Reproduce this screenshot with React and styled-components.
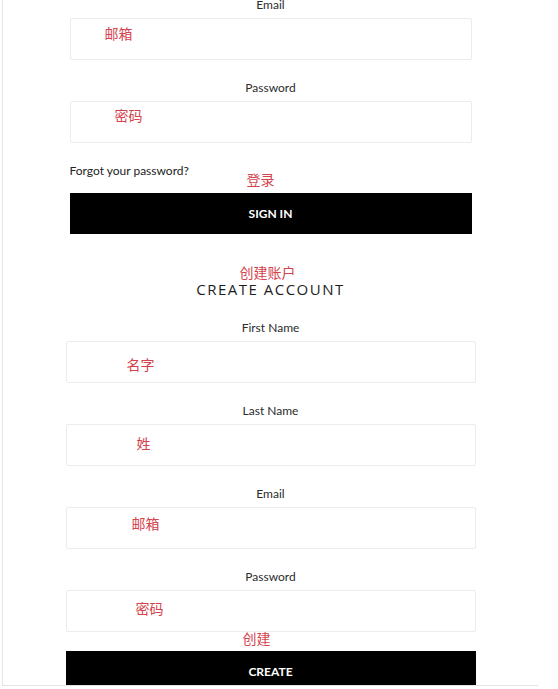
import React from 'react'
import styled, { createGlobalStyle } from 'styled-components'

const GlobalStyle = createGlobalStyle`
    html, body {
        margin: 0;
        padding: 0;
        background: #fff;
    }
    body {
        font-family: Lato, "Noto Sans CJK SC", sans-serif;
        color: #333;
    }
`

const signIn = [
    { label: 'Email', hint: '邮箱', left: 34, top: 6 },
    { label: 'Password', hint: '密码', left: 44, top: 5 },
]

const register = [
    { label: 'First Name', hint: '名字', left: 60, top: 14 },
    { label: 'Last Name', hint: '姓', left: 70, top: 10 },
    { label: 'Email', hint: '邮箱', left: 65, top: 7 },
    { label: 'Password', hint: '密码', left: 69, top: 9 },
]

const App = () => {
    return (
        <>
            <GlobalStyle />
            <StyledFrame>
                <StyledSection $width={402} $offset={-4}>
                    {signIn.map(f => (
                        <Field key={f.label} {...f} />
                    ))}
                    <Forgot>Forgot your password?</Forgot>
                    <Note $indent={177} $top={-8} $bottom={6}>登录</Note>
                    <BlackButton>Sign in</BlackButton>
                </StyledSection>

                <StyledSection $width={410} $offset={30}>
                    <Note $indent={174}>创建账户</Note>
                    <Title>Create Account</Title>
                    {register.map(f => (
                        <Field key={f.label} {...f} />
                    ))}
                    <Note $indent={177} $top={-2} $bottom={5}>创建</Note>
                    <BlackButton>Create</BlackButton>
                </StyledSection>
            </StyledFrame>
        </>
    )
}

const Field = ({ label, hint, left, top }) => (
    <FieldGroup>
        <Label>{label}</Label>
        <InputBox $left={left} $top={top}>
            <Hint>{hint}</Hint>
        </InputBox>
    </FieldGroup>
)

const StyledFrame = styled.div`
    box-sizing: border-box;
    width: 536px;
    height: 686px;
    margin-left: 2px;
    border-left: 1px solid #e4e4e4;
    border-bottom: 1px solid #e4e4e4;
    overflow: hidden;
    display: flex;
    flex-direction: column;
    align-items: center;
`

const StyledSection = styled.section`
    width: ${p => p.$width}px;
    flex-shrink: 0;
    display: flex;
    flex-direction: column;
    margin-top: ${p => p.$offset}px;
`

const FieldGroup = styled.div`
    display: flex;
    flex-direction: column;
    & + & {
        margin-top: 19px;
    }
`

const Label = styled.label`
    display: block;
    text-align: center;
    font-family: Lato, sans-serif;
    font-size: 12px;
    line-height: 16px;
    padding-top: 1px;
    color: #2b2b2b;
    margin-bottom: 5px;
`

const InputBox = styled.div`
    box-sizing: border-box;
    height: 42px;
    border: 1px solid #ececec;
    border-radius: 2px;
    padding: ${p => p.$top}px 0 0 ${p => p.$left}px;
    background: #fff;
`

const Hint = styled.span`
    display: block;
    font-family: "Noto Sans CJK SC", sans-serif;
    font-size: 14px;
    line-height: 16px;
    color: #d4434d;
`

const Forgot = styled.a`
    display: block;
    margin-top: 20px;
    font-family: Lato, sans-serif;
    font-size: 12px;
    line-height: 16px;
    color: #222;
    cursor: pointer;
`

const Note = styled.div`
    font-family: "Noto Sans CJK SC", sans-serif;
    font-size: 14px;
    line-height: 16px;
    color: #d4434d;
    padding-left: ${p => p.$indent}px;
    margin: ${p => p.$top || 0}px 0 ${p => p.$bottom || 0}px;
`

const Title = styled.h2`
    margin: -1px 0 20px;
    text-align: center;
    font-family: "Open Sans", sans-serif;
    font-weight: 400;
    font-size: 15px;
    line-height: 20px;
    letter-spacing: 1.5px;
    text-transform: uppercase;
    color: #1e1e1e;
`

const BlackButton = styled.button`
    flex-shrink: 0;
    width: 100%;
    height: 41px;
    border: none;
    background: #000;
    color: #fff;
    font-family: Lato, sans-serif;
    font-weight: 700;
    font-size: 12px;
    text-transform: uppercase;
    cursor: pointer;
`

export default App
